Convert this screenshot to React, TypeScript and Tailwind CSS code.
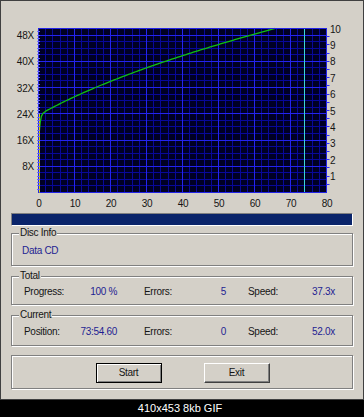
import React from "react";

// chart geometry (page pixels)
const L = 38.5;
const R = 326.5;
const T = 28.5;
const B = 192.5;

const xu = (u: number) => L + u * 3.6;
const yv = (v: number) => B - v * 3.28;
const yr = (r: number) => B - r * 16.4;
const snap = (n: number) => Math.round(n - 0.5) + 0.5;

const ramp: [number, number][] = [
  [0, 15.5],
  [0.15, 17.5],
  [0.3, 19.5],
  [0.5, 21.5],
  [0.8, 23.2],
  [1.2, 24.1],
  [2, 24.8],
];

function speedCurve() {
  const pts: [number, number][] = [...ramp];
  const k = 29.6;
  const v0 = 24.8 * 24.8;
  const tEnd = 2 + (2500 - v0) / k;
  for (let t = 2.5; t < tEnd; t += 0.5) {
    pts.push([t, Math.sqrt(v0 + k * (t - 2))]);
  }
  pts.push([tEnd, 50]);
  return pts.map(([t, v], i) => `${i ? "L" : "M"}${xu(t).toFixed(2)} ${yv(v).toFixed(2)}`).join(" ");
}

function Chart() {
  const vMinor: number[] = [];
  const vMajor: number[] = [];
  for (let u = 2; u < 80; u += 2) (u % 10 === 0 ? vMajor : vMinor).push(snap(xu(u)));
  const hMinor: number[] = [];
  const hMajor: number[] = [];
  for (let v = 2; v <= 48; v += 2) (v % 8 === 0 ? hMajor : hMinor).push(snap(yv(v)));
  const leftTicks: number[] = [];
  for (let v = 1; v < 50; v++) leftTicks.push(snap(yv(v)));
  const rightTicks: number[] = [];
  for (let r = 0.5; r < 10; r += 0.5) rightTicks.push(snap(yr(r)));

  return (
    <svg width={364} height={209} viewBox="0 0 364 209" className="block" style={{ fontFamily: '"Liberation Sans", Arial, sans-serif' }}>
      <rect x={L} y={T} width={R - L} height={B - T} fill="#000024" />
      {vMinor.map((x) => (
        <line key={"vm" + x} x1={x} x2={x} y1={T} y2={B} stroke="#08089a" strokeWidth={1} />
      ))}
      {hMinor.map((y) => (
        <line key={"hm" + y} x1={L} x2={R} y1={y} y2={y} stroke="#08089a" strokeWidth={1} />
      ))}
      {vMajor.map((x) => (
        <line key={"vM" + x} x1={x} x2={x} y1={T} y2={B} stroke="#2424f0" strokeWidth={1} />
      ))}
      {hMajor.map((y) => (
        <line key={"hM" + y} x1={L} x2={R} y1={y} y2={y} stroke="#2424f0" strokeWidth={1} />
      ))}
      <line x1={snap(xu(74))} x2={snap(xu(74))} y1={T} y2={B} stroke="#3ad6d6" strokeWidth={1} />
      <path d={speedCurve()} fill="none" stroke="#10c010" strokeWidth={1.3} strokeLinejoin="round" />
      <rect x={L} y={T} width={R - L} height={B - T} fill="none" stroke="#2323e6" strokeWidth={1} />
      <line x1={39.5} x2={39.5} y1={113} y2={B} stroke="#d8d800" strokeWidth={1} />
      {leftTicks.map((y) => (
        <line key={"lt" + y} x1={37} x2={40} y1={y} y2={y} stroke="#6a6aff" strokeWidth={1} />
      ))}
      {rightTicks.map((y) => (
        <line key={"rt" + y} x1={326} x2={329.5} y1={y} y2={y} stroke="#2f2fff" strokeWidth={1} />
      ))}

      <g fill="#151515" fontSize={10} letterSpacing={-0.2}>
        {[48, 40, 32, 24, 16, 8].map((v) => (
          <text key={"l" + v} x={34} y={yv(v) + 4} textAnchor="end">
            {v}X
          </text>
        ))}
        {[10, 9, 8, 7, 6, 5, 4, 3, 2, 1].map((r) => (
          <text key={"r" + r} x={330} y={yr(r) + 4}>
            {r}
          </text>
        ))}
        {[0, 10, 20, 30, 40, 50, 60, 70, 80].map((u) => (
          <text key={"b" + u} x={xu(u) + 0.5} y={207} textAnchor="middle">
            {u}
          </text>
        ))}
      </g>
    </svg>
  );
}

function GroupBox({ label, className, children }: { label?: string; className: string; children?: React.ReactNode }) {
  return (
    <div className={`relative border border-[#808080] shadow-[inset_1px_1px_0_#ffffff,1px_1px_0_#ffffff] ${className}`}>
      {label && (
        <span className="absolute -top-[7px] left-[7px] bg-[#d4d0c8] px-px leading-[12px] text-[#151515]">{label}</span>
      )}
      {children}
    </div>
  );
}

function StatRow({ first, firstValue, errors, speed }: { first: string; firstValue: string; errors: string; speed: string }) {
  return (
    <div className="flex items-center pl-[12px] pt-[2px] h-full">
      <span className="w-[56px] text-[#151515]">{first}</span>
      <span className="w-[37px] text-right text-[#1e1e92]">{firstValue}</span>
      <span className="w-[27px]" />
      <span className="w-[54px] text-[#151515]">Errors:</span>
      <span className="w-[28px] text-right text-[#1e1e92]">{errors}</span>
      <span className="w-[22px]" />
      <span className="w-[50px] text-[#151515]">Speed:</span>
      <span className="w-[37px] text-right text-[#1e1e92]">{speed}</span>
    </div>
  );
}

export default function App() {
  return (
    <div
      className="w-[364px] h-[417px] bg-black flex flex-col text-[10px] tracking-[-0.3px]"
      style={{ fontFamily: '"Liberation Sans", Arial, sans-serif' }}
    >
      <div className="h-[400px] bg-[#d4d0c8] shadow-[inset_1px_1px_0_#404040,inset_-1px_-1px_0_#404040] flex flex-col">
        <Chart />
        <div className="px-[11px] flex flex-col">
          <div className="mt-[4px] h-[13px] border-t border-l border-t-[#808080] border-l-[#808080] border-b border-r border-b-white border-r-white bg-[#0a246a]" />

          <GroupBox label="Disc Info" className="mt-[7px] h-[33px]">
            <div className="flex items-center h-full pl-[10px] pt-[2px] text-[#1e1e92]">Data CD</div>
          </GroupBox>

          <GroupBox label="Total" className="mt-[10px] h-[29px]">
            <StatRow first="Progress:" firstValue="100 %" errors="5" speed="37.3x" />
          </GroupBox>

          <GroupBox label="Current" className="mt-[10px] h-[31px]">
            <StatRow first="Position:" firstValue="73:54.60" errors="0" speed="52.0x" />
          </GroupBox>

          <GroupBox className="mt-[9px] h-[34px]">
            <div className="flex justify-center gap-[42px] pt-[7px] pl-[1px]">
              <button className="w-[66px] h-[20px] border border-black bg-[#d4d0c8] shadow-[inset_1px_1px_0_#ffffff,inset_-1px_-1px_0_#808080] text-[#151515] leading-none">
                Start
              </button>
              <button className="w-[66px] h-[20px] border border-t-white border-l-white border-r-[#404040] border-b-[#404040] bg-[#d4d0c8] shadow-[inset_-1px_-1px_0_#808080] text-[#151515] leading-none">
                Exit
              </button>
            </div>
          </GroupBox>
        </div>
      </div>
      <div className="flex-1 flex items-center justify-center pr-[4px] text-white text-[11px] tracking-normal">
        410x453 8kb GIF
      </div>
    </div>
  );
}
